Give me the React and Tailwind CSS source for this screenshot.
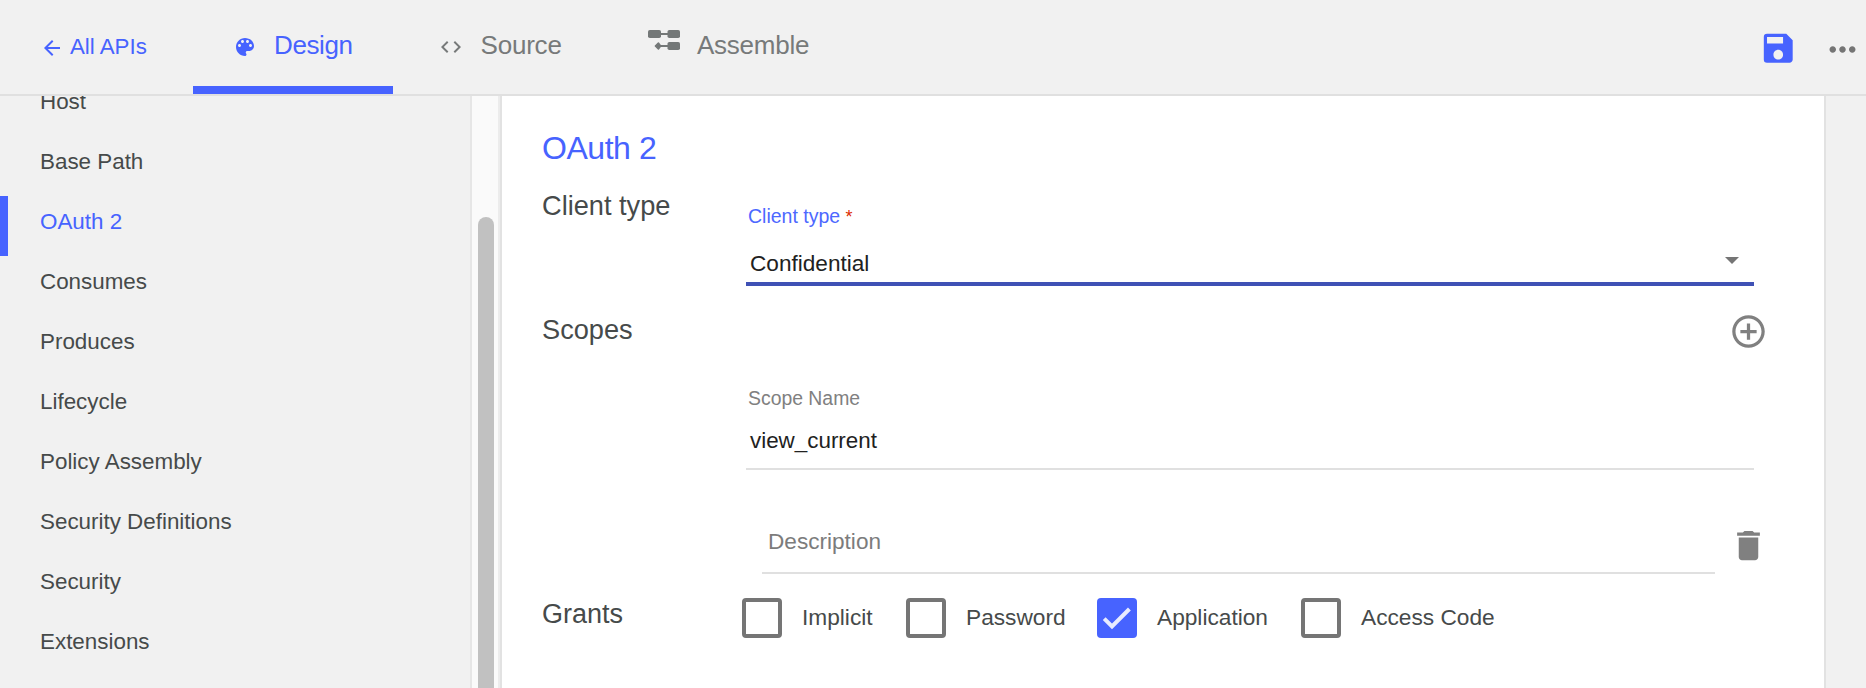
import { MdArrowBack, MdCode, MdSave, MdMoreHoriz, MdAddCircleOutline, MdDelete } from "react-icons/md";

const navItems = [
  "Host",
  "Base Path",
  "OAuth 2",
  "Consumes",
  "Produces",
  "Lifecycle",
  "Policy Assembly",
  "Security Definitions",
  "Security",
  "Extensions",
];

const grants = [
  { label: "Implicit", width: "w-[164px]", checked: false },
  { label: "Password", width: "w-[191px]", checked: false },
  { label: "Application", width: "w-[204px]", checked: true },
  { label: "Access Code", width: "w-[220px]", checked: false },
];

function PaletteIcon() {
  return (
    <svg width="24" height="24" viewBox="0 0 24 24" fill="currentColor" className="mt-[35px]">
      <path d="M12 3c-4.97 0-9 4.03-9 9s4.03 9 9 9c.83 0 1.5-.67 1.5-1.5 0-.39-.15-.74-.39-1.01-.23-.26-.38-.61-.38-.99 0-.83.67-1.5 1.5-1.5H16c2.76 0 5-2.24 5-5 0-4.42-4.03-8-9-8zm-5.5 9c-.83 0-1.5-.67-1.5-1.5S5.67 9 6.5 9 8 9.67 8 10.5 7.33 12 6.5 12zm3-4C8.67 8 8 7.33 8 6.5S8.67 5 9.5 5s1.5.67 1.5 1.5S10.33 8 9.5 8zm5 0c-.83 0-1.5-.67-1.5-1.5S13.67 5 14.5 5s1.5.67 1.5 1.5S15.33 8 14.5 8zm3 4c-.83 0-1.5-.67-1.5-1.5S16.67 9 17.5 9s1.5.67 1.5 1.5-.67 1.5-1.5 1.5z" />
    </svg>
  );
}

function AssembleIcon() {
  return (
    <svg width="32" height="20" viewBox="0 0 32 20" fill="#747878" className="block">
      <rect x="0" y="0" width="13" height="8" rx="1.8" />
      <rect x="19.5" y="0" width="12.5" height="8" rx="1.8" />
      <rect x="12" y="3" width="9" height="2" />
      <rect x="19.5" y="12" width="12.5" height="8" rx="1.8" />
      <rect x="9" y="15" width="12" height="2" />
      <path
        d="M7.4 16 L10.4 13 L12.6 16 L10.4 19 Z"
        stroke="#747878"
        strokeWidth="1.5"
        strokeLinejoin="round"
      />
    </svg>
  );
}

function Header() {
  return (
    <header className="flex h-24 shrink-0 items-start border-b-2 border-[#e0e0e0] bg-[#f1f1f1]">
      <a className="flex w-[193px] items-start pl-10 text-[#4763ff]">
        <MdArrowBack className="mt-9 size-6" />
        <span className="ml-1.5 pt-[34px] text-[22.3px] leading-[25px]">All APIs</span>
      </a>
      <nav className="flex h-full items-start text-[26px] leading-8 text-[#777a7a]">
        <a className="flex h-[94px] w-[200px] border-b-8 border-[#4763ff] pl-10 text-[#4763ff]">
          <PaletteIcon />
          <span className="ml-[17px] pt-[29px] tracking-[-0.4px]">Design</span>
        </a>
        <a className="flex w-[215px] pl-[46px]">
          <MdCode className="mt-[35px] size-6" />
          <span className="ml-[17.5px] pt-[29px] tracking-[-0.2px]">Source</span>
        </a>
        <a className="flex pl-10">
          <span className="mt-[30px]">
            <AssembleIcon />
          </span>
          <span className="ml-[17px] pt-[29px] tracking-[-0.25px]">Assemble</span>
        </a>
      </nav>
      <div className="ml-auto flex pr-1">
        <MdSave className="mr-[25.5px] mt-[29px] size-[38.5px] text-[#4763ff]" />
        <MdMoreHoriz className="mt-[29.5px] size-[39px] text-[#757575]" />
      </div>
    </header>
  );
}

function Sidebar() {
  return (
    <>
      <aside className="w-[472px] shrink-0 overflow-hidden border-r-2 border-[#e6e6e6] bg-[#f1f1f1]">
        <ul className="-mt-5">
          {navItems.map((item) => (
            <li
              key={item}
              className={
                item === "OAuth 2"
                  ? "h-[60px] border-l-8 border-[#4763ff] pl-8 text-[22.4px] leading-[52px] text-[#4763ff]"
                  : "h-[60px] pl-10 text-[22.4px] leading-[52px] text-[#464a4a]"
              }
            >
              {item}
            </li>
          ))}
        </ul>
      </aside>
      <div className="w-[28px] shrink-0 overflow-hidden border-r-2 border-[#ececec] bg-[#fafafa] pl-1.5 pt-[121px]">
        <div className="h-[600px] w-4 rounded-t-full bg-[#c1c1c1]" />
      </div>
    </>
  );
}

function Checkbox({ checked }) {
  if (!checked) return <span className="size-10 rounded border-4 border-[#757575]" />;
  return (
    <span className="size-10 rounded bg-[#4763ff]">
      <svg width="40" height="40" viewBox="0 0 40 40" fill="none" stroke="#e8ebff" strokeWidth="4">
        <path d="M7.2 20.6 L15 28.4 L32.4 11" />
      </svg>
    </span>
  );
}

function OAuthCard() {
  return (
    <main className="flex w-[1326px] shrink-0 flex-col border-x-2 border-[#e2e2e2] bg-white pl-10 pt-8 text-[#464a4a]">
      <h1 className="h-10 text-[32px] leading-10 tracking-[-0.45px] text-[#4763ff]">OAuth 2</h1>

      <section className="flex h-[142px]">
        <h2 className="w-[204px] pt-[18px] text-[27.2px] leading-10">Client type</h2>
        <div className="h-[118px] w-[1008px] border-b-4 border-[#3f51b5] pt-9">
          <label className="block h-[45px] pl-0.5 text-[19.5px] leading-6 text-[#4d68ff]">
            Client type <span className="text-[18px] text-[#dd2c00]">*</span>
          </label>
          <div className="flex justify-between pl-1 pr-[15px] text-[22.6px] leading-[30px] text-[#212121]">
            Confidential
            <svg width="14" height="7" viewBox="0 0 14 7" className="mt-2">
              <path d="M0 0 H14 L7 7 Z" fill="#757575" />
            </svg>
          </div>
        </div>
      </section>

      <section className="flex h-[284px]">
        <h2 className="w-[204px] text-[27.2px] leading-10">Scopes</h2>
        <div className="flex w-[1022px] flex-col">
          <MdAddCircleOutline className="mb-[35px] ml-auto mt-0.5 size-[39px] shrink-0 text-[#808080]" />
          <div className="h-[84px] w-[1008px] shrink-0 border-b-2 border-[#e0e0e0]">
            <label className="block h-10 pl-0.5 text-[19.4px] leading-6 text-[#808080]">Scope Name</label>
            <div className="pl-1 text-[22.4px] leading-[30px] text-[#212121]">view_current</div>
          </div>
          <div className="mt-12 flex justify-between pl-4">
            <div className="h-14 w-[953px] border-b-2 border-[#e0e0e0] pl-1.5 pt-[9px] text-[22.6px] leading-[30px] text-[#7c7c7c]">
              Description
            </div>
            <MdDelete className="mt-2 size-[39px] text-[#808080]" />
          </div>
        </div>
      </section>

      <section className="flex">
        <h2 className="w-[200px] text-[27px] leading-10">Grants</h2>
        <div className="flex pt-1">
          {grants.map((grant) => (
            <label key={grant.label} className={`flex gap-5 text-[22.7px] leading-[38px] ${grant.width}`}>
              <Checkbox checked={grant.checked} />
              {grant.label}
            </label>
          ))}
        </div>
      </section>
    </main>
  );
}

export default function App() {
  return (
    <div className="flex h-[688px] w-[1866px] flex-col overflow-hidden bg-[#f1f1f1] font-['Liberation_Sans',Arial,sans-serif]">
      <Header />
      <div className="flex min-h-0 flex-1">
        <Sidebar />
        <OAuthCard />
      </div>
    </div>
  );
}
